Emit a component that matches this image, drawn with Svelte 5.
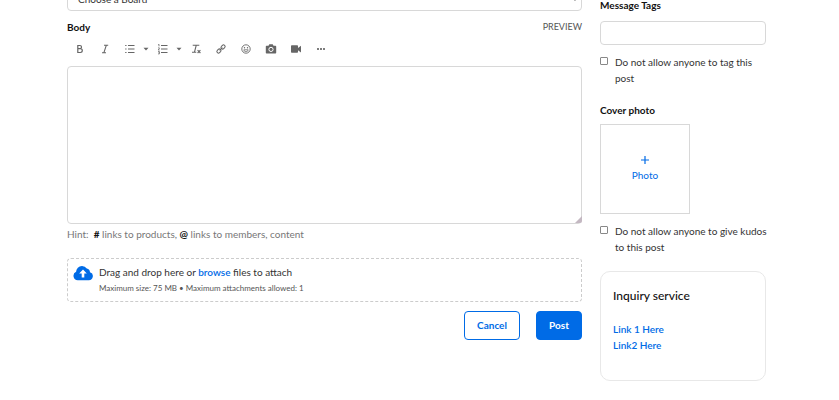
<script>
  let board = $state('');
  let body = $state('');
  let tags = $state('');
  let noTags = $state(false);
  let noKudos = $state(false);
</script>

<main class="page">
  <form class="editor" onsubmit={(e) => e.preventDefault()}>
    <div class="select-wrap">
      <select aria-label="Board" bind:value={board}>
        <option value="">Choose a Board</option>
      </select>
      <svg class="arrow" width="8" height="5" viewBox="0 0 8 5" aria-hidden="true"><path d="M1 0l3 3 3-3" fill="none" stroke="#333" stroke-width="1.2" /></svg>
    </div>

    <div class="heading">
      <label class="title" for="body">Body</label>
      <button type="button" class="preview">PREVIEW</button>
    </div>

    <div class="toolbar" role="toolbar" aria-label="Formatting">
      <button type="button" aria-label="Bold">
        <svg width="12" height="12" viewBox="0 0 12 12"><path d="M3.8 2.5v7h2.5a2 1.9 0 0 0 0-3.8H3.8h2.1a1.6 1.6 0 0 0 0-3.2z" fill="none" stroke="currentColor" stroke-width="1.2" /></svg>
      </button>
      <button type="button" aria-label="Italic">
        <svg width="12" height="12" viewBox="0 0 12 12"><path d="M5 2.3h4.2M3 9.7h4M7.3 2.3L4.9 9.7" fill="none" stroke="currentColor" stroke-width="1.1" /></svg>
      </button>
      <span class="pair">
        <button type="button" aria-label="Bullet list">
          <svg width="12" height="12" viewBox="0 0 12 12"><path d="M4 2.5h6.5M4 6h6.5M4 9.5h6.5M1.2 2.5h1.3M1.2 6h1.3M1.2 9.5h1.3" stroke="currentColor" stroke-width="1.1" /></svg>
        </button>
        <button type="button" class="drop" aria-label="Bullet list styles">
          <svg width="6" height="12" viewBox="0 0 6 12"><path d="M.5 4.7h5L3 7.4z" fill="currentColor" /></svg>
        </button>
      </span>
      <span class="pair">
        <button type="button" aria-label="Numbered list">
          <svg width="12" height="12" viewBox="0 0 12 12"><path d="M4 2.5h6.5M4 6h6.5M4 9.5h6.5" stroke="currentColor" stroke-width="1.1" /><path d="M1.2 1.8l.8-.5v2M1.1 4.9h1.3v.6L1.2 7h1.4M1.1 8.5h1.3v2.4H1.1M1.6 9.7h.8" fill="none" stroke="currentColor" stroke-width=".8" /></svg>
        </button>
        <button type="button" class="drop" aria-label="Numbered list styles">
          <svg width="6" height="12" viewBox="0 0 6 12"><path d="M.5 4.7h5L3 7.4z" fill="currentColor" /></svg>
        </button>
      </span>
      <button type="button" aria-label="Clear formatting">
        <svg width="12" height="12" viewBox="0 0 12 12"><path d="M2.7 2.2h6.6M6.3 2.2L4.4 9.3M2 9.3h4.3M7.6 7.2l2.8 2.8M10.4 7.2L7.6 10" fill="none" stroke="currentColor" stroke-width="1.1" /></svg>
      </button>
      <button type="button" aria-label="Insert link">
        <svg width="12" height="12" viewBox="0 0 12 12"><g fill="none" stroke="currentColor" stroke-width="1" transform="rotate(-45 6 6)"><rect x=".9" y="4.4" width="4.4" height="3.2" rx="1.5" /><rect x="6.7" y="4.4" width="4.4" height="3.2" rx="1.5" /><path d="M4 6h4" /></g></svg>
      </button>
      <button type="button" aria-label="Insert emoji">
        <svg width="12" height="12" viewBox="0 0 12 12"><circle cx="6" cy="6" r="4.2" fill="none" stroke="currentColor" stroke-width=".9" /><path d="M3.6 6.8h4.8M3.8 7c.5 2.1 3.9 2.1 4.4 0" fill="none" stroke="currentColor" stroke-width=".8" /><circle cx="4.5" cy="4.8" r=".7" fill="currentColor" /><circle cx="7.5" cy="4.8" r=".7" fill="currentColor" /></svg>
      </button>
      <button type="button" aria-label="Insert photo">
        <svg width="12" height="12" viewBox="0 0 12 12"><path d="M1.5 2.7h2l.8-1.4h3.4l.8 1.4h2c.4 0 .7.3.7.7v6.3c0 .4-.3.7-.7.7h-9c-.4 0-.7-.3-.7-.7V3.4c0-.4.3-.7.7-.7z" fill="currentColor" /><circle cx="6" cy="6.4" r="2.1" fill="none" stroke="#fff" stroke-width="1" /></svg>
      </button>
      <button type="button" aria-label="Insert video">
        <svg width="12" height="12" viewBox="0 0 12 12"><path d="M1.7 2.3h5.6c.4 0 .7.3.7.7v1.9l3-2.2v6.8L8 7.3V9c0 .4-.3.7-.7.7H1.700c-.4 0-.7-.3-.7-.7V3c0-.4.3-.7.7-.7z" fill="currentColor" /></svg>
      </button>
      <button type="button" aria-label="More">
        <svg width="12" height="12" viewBox="0 0 12 12"><g fill="currentColor"><rect x="2" y="5" width="2" height="2" rx=".7" /><rect x="5" y="5" width="2" height="2" rx=".7" /><rect x="8" y="5" width="2" height="2" rx=".7" /></g></svg>
      </button>
    </div>

    <div class="area">
      <textarea id="body" bind:value={body}></textarea>
      <svg class="grip" width="7" height="7" viewBox="0 0 7 7" aria-hidden="true"><path d="M7 0v5a2 2 0 0 1-2 2H0z" fill="#c4b8c2" /></svg>
    </div>
    <p class="hint">Hint: &nbsp;<b>#</b> links to products, <b>@</b> links to members, content</p>

    <div class="dropzone">
      <svg width="20" height="16" viewBox="0 0 20 16" aria-hidden="true"><path d="M4.7 15.2A4.4 4.4 0 0 1 3.1 6.8 5.800 5.800 0 0 1 9 1a5.700 5.700 0 0 1 4.8 2.6A4 4 0 0 1 17 7.2a4.100 4.100 0 0 1-1.4 8z" fill="#006be6" /><path d="M10 4.500l-3.800 4h2.500V12.500h2.600V8.500h2.500z" fill="#fff" /></svg>
      <div>
        <p class="drag">Drag and drop here or <a href="#browse">browse</a> files to attach</p>
        <p class="limits">Maximum size: 75 MB • Maximum attachments allowed: 1</p>
      </div>
    </div>

    <div class="actions">
      <button type="button" class="cancel">Cancel</button>
      <button type="submit" class="post">Post</button>
    </div>
  </form>

  <aside>
    <label class="title" for="tags">Message Tags</label>
    <input id="tags" class="tags" type="text" bind:value={tags} />
    <label class="check">
      <input type="checkbox" bind:checked={noTags} />
      <span>Do not allow anyone to tag this post</span>
    </label>

    <h2 class="title cover">Cover photo</h2>
    <button type="button" class="photo">
      <svg width="8" height="8" viewBox="0 0 8 8" aria-hidden="true"><path d="M4 0v8M0 4h8" stroke="currentColor" stroke-width="1.2" /></svg>
      Photo
    </button>
    <label class="check">
      <input type="checkbox" bind:checked={noKudos} />
      <span>Do not allow anyone to give kudos to this post</span>
    </label>

    <section class="card">
      <h3>Inquiry service</h3>
      <a href="#link1">Link 1 Here</a>
      <a href="#link2">Link2 Here</a>
    </section>
  </aside>
</main>

<style>
  :global(body) { background: #fff; }
  .page, .page * { box-sizing: border-box; }
  .page {
    display: grid;
    grid-template-columns: minmax(0, 1fr) 166px;
    align-items: start;
    gap: 18px;
    padding: 0 73px 0 67px;
    overflow: hidden;
    font: 10px/16px Lato, "Liberation Sans", sans-serif;
    color: #333;
  }
  p, h2, h3 { margin: 0; }
  button, input, textarea, select { font: inherit; color: inherit; margin: 0; }
  button { padding: 0; border: 0; background: none; cursor: pointer; }
  a { color: #006be6; font-weight: 600; text-decoration: none; }
  .title { display: block; font-size: 10px; font-weight: 700; line-height: 16px; color: #111; }

  .select-wrap { position: relative; margin-top: -13px; }
  select {
    display: block;
    width: 100%;
    height: 24px;
    padding: 0 10px;
    border: 1px solid #d8d8d8;
    border-radius: 4px;
    background: #fff;
    appearance: none;
  }
  .arrow { position: absolute; right: 3px; top: 10px; }
  .heading { display: flex; justify-content: space-between; align-items: center; margin-top: 8px; }
  .preview { font-size: 9px; line-height: 16px; color: #555; }
  .toolbar { display: flex; gap: 13px; padding: 8px 7px 11px; color: #666; }
  .toolbar button { display: flex; color: #666; }
  .toolbar svg { display: block; }
  .pair { display: flex; gap: 7px; }
  .pair .drop { margin-right: -5px; }
  .area { position: relative; }
  textarea {
    display: block;
    width: 100%;
    height: 158px;
    padding: 8px;
    border: 1px solid #d8d8d8;
    border-radius: 4px;
    resize: none;
  }
  .grip { position: absolute; right: 0; bottom: 1px; }
  .hint { margin-top: 2px; color: #777; }
  .hint b { color: #111; }
  .dropzone {
    display: flex;
    gap: 6px;
    margin-top: 16px;
    padding: 5px;
    height: 44px;
    border: 1px dashed #ccc;
    border-radius: 4px;
  }
  .dropzone svg { margin-top: 1px; }
  .limits { font-size: 8px; color: #555; }
  .actions { display: flex; justify-content: flex-end; gap: 16px; margin-top: 9px; }
  .actions button { height: 29px; padding-bottom: 2px; border: 1px solid #006be6; border-radius: 4px; font-weight: 700; }
  .actions .cancel { width: 56px; color: #006be6; }
  .actions .post { width: 46px; background: #006be6; color: #fff; }

  aside { margin-top: -3px; }
  .tags {
    display: block;
    width: 100%;
    height: 24px;
    margin-top: 8px;
    padding: 0 8px;
    border: 1px solid #d8d8d8;
    border-radius: 4px;
  }
  .check { display: flex; align-items: flex-start; gap: 7px; margin: 9px -4px 0 0; }
  .check input {
    flex: none;
    width: 8px;
    height: 8px;
    margin-top: 3px;
    border: 1px solid #888;
    border-radius: 1px;
    appearance: none;
  }
  .check input:checked { background: #006be6; border-color: #006be6; }
  .cover { margin-top: 16px; }
  .photo {
    display: flex;
    flex-direction: column;
    align-items: center;
    justify-content: center;
    gap: 3px;
    width: 90px;
    height: 90px;
    margin-top: 6px;
    border: 1px solid #d8d8d8;
    color: #006be6;
  }
  .card {
    display: flex;
    flex-direction: column;
    align-items: flex-start;
    margin-top: 16px;
    padding: 16px 12px 27px;
    border: 1px solid #e8e8e8;
    border-radius: 10px;
  }
  .card h3 { margin-bottom: 17px; font-size: 12px; font-weight: 500; line-height: 16px; color: #111; }
</style>
